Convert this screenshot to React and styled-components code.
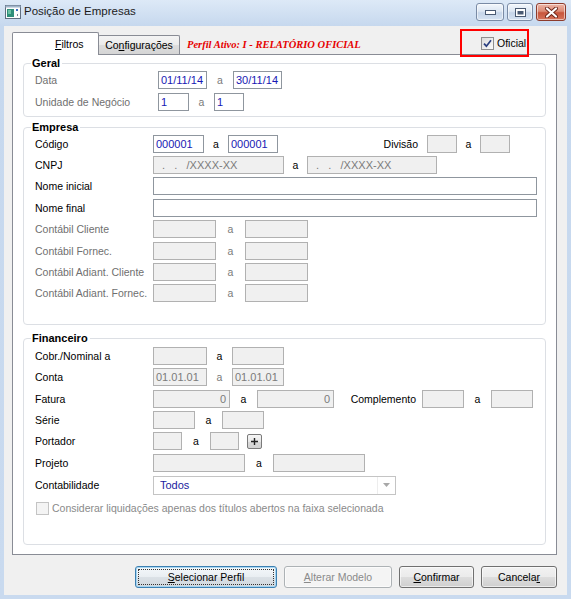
import React from 'react';
import styled, { createGlobalStyle } from 'styled-components';

const Global = createGlobalStyle`
  html, body { margin: 0; padding: 0; background: #fff; }
  body { font-family: "Liberation Sans", Arial, sans-serif; font-size: 11px; color: #000; }
  #root { width: 571px; height: 599px; }
  * { box-sizing: border-box; }
`;

const Window = styled.div`
  width: 571px;
  height: 599px;
  display: flex;
  flex-direction: column;
  background: linear-gradient(180deg, #dde9f7 0px, #c6d8ee 26px, #c9daef 100%);
  overflow: hidden;
`;

const TitleBar = styled.div`
  height: 26px;
  flex: none;
  display: flex;
  align-items: flex-start;
  padding: 0 5px 0 5px;
`;

const AppIcon = styled.svg`
  flex: none;
  margin-top: 5px;
`;

const Title = styled.div`
  margin-left: 3px;
  line-height: 23px;
  font-size: 11.5px;
  color: #1b1b1b;
`;

const CaptionGroup = styled.div`
  margin-left: auto;
  margin-top: 3px;
  display: flex;
  gap: 3px;
`;

const CaptionButton = styled.div`
  width: ${p => p.$w}px;
  height: 18px;
  border-radius: 3px;
  display: flex;
  align-items: center;
  justify-content: center;
  border: 1px solid ${p => (p.$close ? '#8d3b2c' : '#7a8ba5')};
  background: ${p =>
    p.$close
      ? 'linear-gradient(180deg,#eeb6a8 0%,#dc8b76 45%,#c8553c 55%,#d5745c 100%)'
      : 'linear-gradient(180deg,#f3f7fc 0%,#dde7f3 45%,#c6d5e9 55%,#d6e3f2 100%)'};
  box-shadow: inset 0 0 0 1px rgba(255, 255, 255, 0.55);
`;

const Client = styled.div`
  flex: 1;
  margin: 0 4px 4px 4px;
  background: #f0f0f0;
  padding: 6px 10px 7px 8px;
  display: flex;
  flex-direction: column;
`;

const TabHeader = styled.div`
  height: 22px;
  flex: none;
  display: flex;
  align-items: flex-end;
`;

const Tab = styled.div`
  position: relative;
  flex: none;
  width: ${p => p.$w}px;
  height: ${p => (p.$active ? 23 : 19)}px;
  margin-bottom: ${p => (p.$active ? -1 : 0)}px;
  margin-left: ${p => (p.$active ? 0 : -1)}px;
  z-index: ${p => (p.$active ? 2 : 1)};
  border: 1px solid #898c95;
  border-bottom: none;
  border-radius: 2px 2px 0 0;
  background: ${p =>
    p.$active ? '#ffffff' : 'linear-gradient(180deg,#f4f4f4 0%,#ebebeb 50%,#dddddd 51%,#d5d5d5 100%)'};
  display: flex;
  align-items: center;
  justify-content: ${p => (p.$active ? 'flex-start' : 'center')};
  padding-left: ${p => (p.$active ? 42 : 0)}px;
  font-size: 10.5px;
  padding-bottom: ${p => (p.$active ? 1 : 0)}px;
`;

const Mn = styled.span`
  text-decoration: underline;
`;

const ProfileNote = styled.div`
  align-self: center;
  margin-left: 7px;
  margin-top: 2px;
  color: #e60000;
  font-family: "Liberation Serif", "Times New Roman", serif;
  font-style: italic;
  font-weight: bold;
  font-size: 10.5px;
  white-space: nowrap;
`;

const OfficialHighlight = styled.div`
  position: relative;
  z-index: 3;
  align-self: flex-start;
  margin-left: auto;
  margin-right: 28px;
  margin-top: -3px;
  width: 69px;
  height: 28px;
  flex: none;
  border: 2px solid #ff0000;
  display: flex;
  align-items: center;
  padding-left: 19px;
`;

const CheckLabel = styled.span`
  margin-left: ${p => p.$gap ?? 3}px;
  font-size: ${p => p.$size ?? 11}px;
  color: ${p => (p.$dim ? '#8a8a8a' : '#000')};
  white-space: nowrap;
`;

const Box = styled.div`
  width: 13px;
  height: 13px;
  flex: none;
  border: 1px solid ${p => (p.$disabled ? '#c4c4c4' : '#8f8f8f')};
  background: ${p => (p.$disabled ? '#f4f4f4' : 'linear-gradient(135deg,#dcdcdc 0%,#fcfcfc 100%)')};
  display: flex;
  align-items: center;
  justify-content: center;
`;

const Panel = styled.div`
  flex: 1;
  background: #fff;
  border: 1px solid #898c95;
  padding: 2px 10px 0 10px;
  display: flex;
  flex-direction: column;
`;

const Group = styled.fieldset`
  margin: ${p => p.$mt ?? 0}px 0 0 0;
  border: 1px solid #dcdfe4;
  border-radius: 4px;
  padding: ${p => p.$pt ?? 0}px 8px ${p => p.$pb}px 11px;
  min-width: 0;
`;

const Legend = styled.legend`
  font-weight: bold;
  font-size: 11px;
  line-height: 12px;
  padding: 0 2px 0 1px;
  margin-left: -4px;
  color: #000;
`;

const Row = styled.div`
  display: flex;
  align-items: center;
  height: ${p => p.$h ?? 21.4}px;
  padding-left: ${p => p.$indent ?? 0}px;
`;

const Label = styled.div`
  flex: none;
  width: ${p => p.$w}px;
  font-size: 10.5px;
  color: ${p => (p.$dim ? '#6f6f6f' : '#000')};
  text-align: ${p => p.$align ?? 'left'};
  padding-right: ${p => p.$pr ?? 0}px;
  white-space: nowrap;
`;

const Sep = styled.div`
  flex: none;
  width: ${p => p.$w}px;
  text-align: center;
  font-size: 10.5px;
  color: ${p => (p.$dim ? '#7a7a7a' : '#000')};
`;

const Field = styled.div`
  flex: none;
  width: ${p => p.$w}px;
  height: 18px;
  border: 1px solid ${p => (p.$off ? '#b1b1b1' : '#8f969e')};
  background: ${p => (p.$off ? '#f0f0f0' : '#ffffff')};
  color: ${p => (p.$off ? '#7b7b7b' : '#1818b4')};
  font-size: 11px;
  line-height: 16px;
  padding: 0 3px 0 2px;
  text-align: ${p => p.$align ?? 'left'};
  white-space: pre;
  overflow: hidden;
`;

const SmallButton = styled.div`
  flex: none;
  margin-left: 8px;
  width: 15px;
  height: 15px;
  border: 1px solid #7a7a7a;
  border-radius: 2px;
  background: linear-gradient(180deg, #f6f6f6 0%, #e8e8e8 50%, #dadada 51%, #d2d2d2 100%);
  display: flex;
  align-items: center;
  justify-content: center;
`;

const Select = styled.div`
  flex: none;
  width: 243px;
  height: 19px;
  border: 1px solid #c4c4c4;
  background: #fff;
  display: flex;
  align-items: center;
  padding-left: 6px;
  color: #1c1ca0;
  font-size: 11px;
`;

const SelectValue = styled.span`
  flex: 1;
`;

const ArrowCell = styled.div`
  width: 18px;
  height: 100%;
  border-left: 1px solid #ededed;
  display: flex;
  align-items: center;
  justify-content: center;
`;

const ButtonBar = styled.div`
  flex: none;
  margin-top: 11px;
  display: flex;
  justify-content: flex-end;
  gap: 7px;
`;

const Button = styled.div`
  width: ${p => p.$w}px;
  height: 22px;
  border-radius: 3px;
  border: 1px solid ${p => (p.$primary ? '#3c7fb1' : p.$disabled ? '#adb2b5' : '#707070')};
  background: ${p =>
    p.$disabled
      ? '#f4f4f4'
      : p.$primary
      ? 'linear-gradient(180deg,#f4f8fb 0%,#e9eef2 50%,#dbe1e6 51%,#d1d8de 100%)'
      : 'linear-gradient(180deg,#f2f2f2 0%,#ebebeb 50%,#dddddd 51%,#cfcfcf 100%)'};
  color: ${p => (p.$disabled ? '#8a8a8a' : '#000')};
  display: flex;
  align-items: center;
  justify-content: center;
  font-size: 10.5px;
  outline: ${p => (p.$primary ? '1px dotted #333' : 'none')};
  outline-offset: -4px;
  box-shadow: ${p => (p.$primary ? 'inset 0 0 0 1px #a6d6f2' : 'inset 0 0 0 1px rgba(255,255,255,0.6)')};
`;

const CheckMark = () => (
  <svg width="9" height="9" viewBox="0 0 9 9">
    <path d="M1 4.6 L3.4 7.2 L8 1.2" fill="none" stroke="#2a3f80" strokeWidth="1.7" />
  </svg>
);

export default function App() {
  return (
    <Window>
      <Global />
      <TitleBar>
        <AppIcon width="16" height="14" viewBox="0 0 16 14">
          <rect x="0.5" y="0.5" width="15" height="13" fill="#fdfdfd" stroke="#5f6e80" />
          <rect x="0.5" y="0.5" width="15" height="2" fill="#9fb3c9" />
          <rect x="2" y="4" width="7" height="8" fill="#2f8e79" />
          <rect x="3" y="5" width="3" height="4" fill="#69c0a3" />
          <rect x="11" y="4" width="2" height="2" fill="#3e6fc0" />
          <rect x="12" y="9" width="1" height="2" fill="#7a8796" />
        </AppIcon>
        <Title>Posição de Empresas</Title>
        <CaptionGroup>
          <CaptionButton $w={28}>
            <svg width="11" height="5" viewBox="0 0 11 5">
              <rect x="0.5" y="0.5" width="10" height="4" fill="#fff" stroke="#4a5a72" />
            </svg>
          </CaptionButton>
          <CaptionButton $w={26}>
            <svg width="11" height="9" viewBox="0 0 11 9">
              <rect x="0.5" y="0.5" width="10" height="8" fill="#fff" stroke="#4a5a72" />
              <rect x="2.5" y="3" width="6" height="3.5" fill="#4a5a72" />
            </svg>
          </CaptionButton>
          <CaptionButton $w={30} $close>
            <svg width="13" height="11" viewBox="0 0 13 11">
              <path d="M2 1.5 L11 9.5 M11 1.5 L2 9.5" stroke="#6b2418" strokeWidth="4" strokeLinecap="round" />
              <path d="M2 1.5 L11 9.5 M11 1.5 L2 9.5" stroke="#ffffff" strokeWidth="2.2" strokeLinecap="round" />
            </svg>
          </CaptionButton>
        </CaptionGroup>
      </TitleBar>

      <Client>
        <TabHeader>
          <Tab $active $w={87}>
            <span><Mn>F</Mn>iltros</span>
          </Tab>
          <Tab $w={82}>
            <span>Co<Mn>n</Mn>figurações</span>
          </Tab>
          <ProfileNote>Perfil Ativo: I - RELATÓRIO OFICIAL</ProfileNote>
          <OfficialHighlight>
            <Box>
              <CheckMark />
            </Box>
            <CheckLabel $size={10.5}>Oficial</CheckLabel>
          </OfficialHighlight>
        </TabHeader>

        <Panel>
          <Group $pb={3}>
            <Legend>Geral</Legend>
            <Row $h={22}>
              <Label $w={123} $dim>Data</Label>
              <Field $w={49}>01/11/14</Field>
              <Sep $w={26} $dim>a</Sep>
              <Field $w={49}>30/11/14</Field>
            </Row>
            <Row $h={22}>
              <Label $w={123} $dim>Unidade de Negócio</Label>
              <Field $w={31}>1</Field>
              <Sep $w={25} $dim>a</Sep>
              <Field $w={30}>1</Field>
            </Row>
          </Group>

          <Group $mt={4} $pb={20}>
            <Legend>Empresa</Legend>
            <Row>
              <Label $w={118}>Código</Label>
              <Field $w={51}>000001</Field>
              <Sep $w={24}>a</Sep>
              <Field $w={50}>000001</Field>
              <Label $w={149} $align="right" $pr={9}>Divisão</Label>
              <Field $w={30} $off />
              <Sep $w={23}>a</Sep>
              <Field $w={30} $off />
            </Row>
            <Row>
              <Label $w={118}>CNPJ</Label>
              <Field $w={131} $off>{'  .   .   /XXXX-XX'}</Field>
              <Sep $w={23}>a</Sep>
              <Field $w={130} $off>{'  .   .   /XXXX-XX'}</Field>
            </Row>
            <Row>
              <Label $w={118}>Nome inicial</Label>
              <Field $w={384} />
            </Row>
            <Row>
              <Label $w={118}>Nome final</Label>
              <Field $w={384} />
            </Row>
            <Row>
              <Label $w={118} $dim>Contábil Cliente</Label>
              <Field $w={63} $off />
              <Sep $w={29} $dim>a</Sep>
              <Field $w={63} $off />
            </Row>
            <Row>
              <Label $w={118} $dim>Contábil Fornec.</Label>
              <Field $w={63} $off />
              <Sep $w={29} $dim>a</Sep>
              <Field $w={63} $off />
            </Row>
            <Row>
              <Label $w={118} $dim>Contábil Adiant. Cliente</Label>
              <Field $w={63} $off />
              <Sep $w={29} $dim>a</Sep>
              <Field $w={63} $off />
            </Row>
            <Row>
              <Label $w={118} $dim>Contábil Adiant. Fornec.</Label>
              <Field $w={63} $off />
              <Sep $w={29} $dim>a</Sep>
              <Field $w={63} $off />
            </Row>
          </Group>

          <Group $mt={7} $pt={1} $pb={25}>
            <Legend>Financeiro</Legend>
            <Row>
              <Label $w={118}>Cobr./Nominal a</Label>
              <Field $w={54} $off />
              <Sep $w={25}>a</Sep>
              <Field $w={52} $off />
            </Row>
            <Row>
              <Label $w={118}>Conta</Label>
              <Field $w={54} $off>01.01.01</Field>
              <Sep $w={25} $dim>a</Sep>
              <Field $w={52} $off>01.01.01</Field>
            </Row>
            <Row>
              <Label $w={118}>Fatura</Label>
              <Field $w={77} $off $align="right">0</Field>
              <Sep $w={27}>a</Sep>
              <Field $w={77} $off $align="right">0</Field>
              <Label $w={88} $align="right" $pr={6}>Complemento</Label>
              <Field $w={42} $off />
              <Sep $w={27}>a</Sep>
              <Field $w={42} $off />
            </Row>
            <Row>
              <Label $w={118}>Série</Label>
              <Field $w={42} $off />
              <Sep $w={27}>a</Sep>
              <Field $w={42} $off />
            </Row>
            <Row>
              <Label $w={118}>Portador</Label>
              <Field $w={29} $off />
              <Sep $w={28}>a</Sep>
              <Field $w={29} $off />
              <SmallButton>
                <svg width="9" height="9" viewBox="0 0 9 9">
                  <path d="M4.5 1 V8 M1 4.5 H8" stroke="#222" strokeWidth="1.4" />
                </svg>
              </SmallButton>
            </Row>
            <Row>
              <Label $w={118}>Projeto</Label>
              <Field $w={92} $off />
              <Sep $w={28}>a</Sep>
              <Field $w={92} $off />
            </Row>
            <Row $h={24}>
              <Label $w={118}>Contabilidade</Label>
              <Select>
                <SelectValue>Todos</SelectValue>
                <ArrowCell>
                  <svg width="7" height="4" viewBox="0 0 7 4">
                    <path d="M0 0 H7 L3.5 4 Z" fill="#a8a8a8" />
                  </svg>
                </ArrowCell>
              </Select>
            </Row>
            <Row $h={22} $indent={1}>
              <Box $disabled />
              <CheckLabel $dim $size={10.5}>
                Considerar liquidações apenas dos títulos abertos na faixa selecionada
              </CheckLabel>
            </Row>
          </Group>
        </Panel>

        <ButtonBar>
          <Button $w={142} $primary>
            <span><Mn>S</Mn>elecionar Perfil</span>
          </Button>
          <Button $w={108} $disabled>
            <span><Mn>A</Mn>lterar Modelo</span>
          </Button>
          <Button $w={75}>
            <span><Mn>C</Mn>onfirmar</span>
          </Button>
          <Button $w={76}>
            <span>Cancela<Mn>r</Mn></span>
          </Button>
        </ButtonBar>
      </Client>
    </Window>
  );
}
